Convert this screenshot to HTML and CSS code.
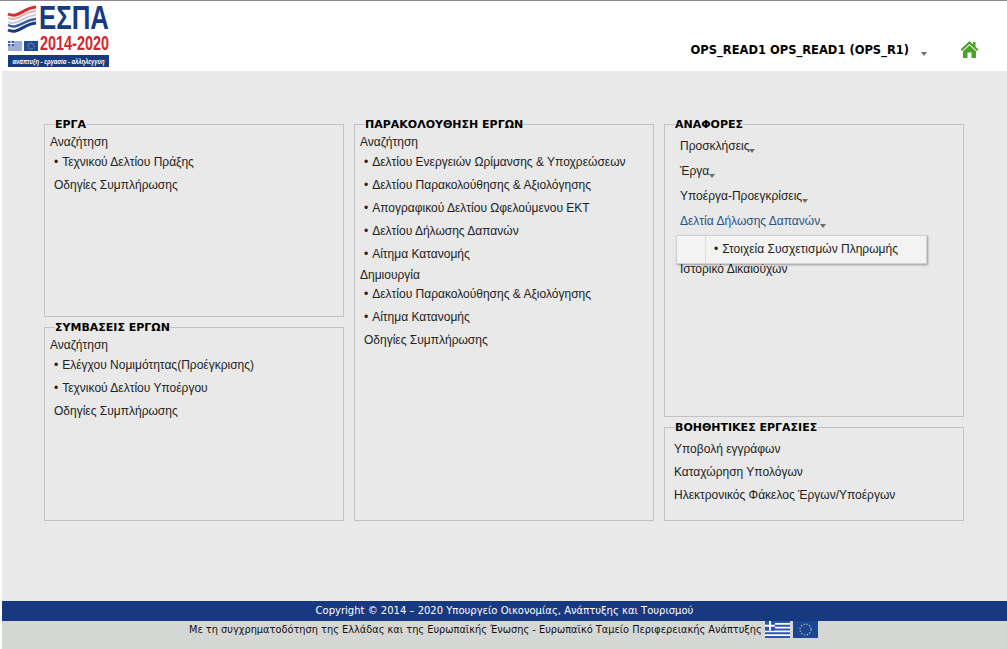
FILE: index.html
```
<!DOCTYPE html>
<html lang="el">
<head>
<meta charset="utf-8">
<title>ΕΣΠΑ 2014-2020</title>
<link rel="stylesheet" href="styles.css">
</head>
<body>
<div class="page">
  <header class="header">
    <svg class="logo" width="130" height="63" viewBox="0 0 130 63">
      <g fill="none">
        <path d="M0 9 C10 14 15 3 28 2" stroke="#d92b32" stroke-width="3"/>
        <path d="M0 13 C10 17 15 7 28 6" stroke="#eeb1b1" stroke-width="2"/>
        <path d="M0 17 C10 21 15 11 28 10" stroke="#c4cce0" stroke-width="2"/>
        <path d="M0 20 C10 25 15 15 28 14" stroke="#3a5aa0" stroke-width="2.500"/>
        <path d="M0 25 C10 30 15 19 28 18" stroke="#173a80" stroke-width="3"/>
      </g>
      <text x="31" y="24" class="logo-espa" textLength="70" lengthAdjust="spacingAndGlyphs">ΕΣΠΑ</text>
      <text x="32" y="45" class="logo-years" textLength="69" lengthAdjust="spacingAndGlyphs">2014-2020</text>
      <rect x="0" y="36" width="14" height="10" fill="#fff"/>
      <path d="M0 37h14M0 39h14M0 41h14M0 43h14M0 45h14" stroke="#3a5ea8" stroke-width="1"/>
      <rect x="0" y="36" width="6" height="5" fill="#3a5ea8"/>
      <path d="M3 36v5M0 38.500h6" stroke="#fff" stroke-width="1"/>
      <rect x="16" y="36" width="14" height="10" fill="#1f4a9c"/>
      <circle cx="23" cy="41" r="3" fill="none" stroke="#d8c94a" stroke-width="1" stroke-dasharray="1 1"/>
      <rect x="0" y="50" width="101" height="12" fill="#173a80"/>
      <text x="50.500" y="59" class="logo-tag" textLength="92" lengthAdjust="spacingAndGlyphs">ανάπτυξη - εργασία - αλληλεγγύη</text>
    </svg>
    <div class="user">
      <span class="user-name">OPS_READ1 OPS_READ1 (OPS_R1)</span>
      <span class="caret user-caret"></span>
      <svg class="home" width="19" height="19" viewBox="0 0 19 19">
        <path d="M9.500 1 L0.500 9.500 L2 11 L9.500 4 L17 11 L18.500 9.500 L15.500 6.700 V2 H13 V4.300Z" fill="#4ca329"/>
        <path d="M9.500 5.300 L3 11.300 V18 H7.500 V12.500 H11.500 V18 H16 V11.300Z" fill="#4ca329"/>
      </svg>
    </div>
  </header>

  <main class="main">
    <div class="column">
      <fieldset class="box box-top-left">
        <legend>ΕΡΓΑ</legend>
        <div class="heading">Αναζήτηση</div>
        <div class="item"><span class="bullet">•</span>Τεχνικού Δελτίου Πράξης</div>
        <div class="item">Οδηγίες Συμπλήρωσης</div>
      </fieldset>
      <fieldset class="box box-bottom-left">
        <legend>ΣΥΜΒΑΣΕΙΣ ΕΡΓΩΝ</legend>
        <div class="heading">Αναζήτηση</div>
        <div class="item"><span class="bullet">•</span>Ελέγχου Νομιμότητας(Προέγκρισης)</div>
        <div class="item"><span class="bullet">•</span>Τεχνικού Δελτίου Υποέργου</div>
        <div class="item">Οδηγίες Συμπλήρωσης</div>
      </fieldset>
    </div>
    <div class="column">
      <fieldset class="box box-full">
        <legend>ΠΑΡΑΚΟΛΟΥΘΗΣΗ ΕΡΓΩΝ</legend>
        <div class="heading">Αναζήτηση</div>
        <div class="item"><span class="bullet">•</span>Δελτίου Ενεργειών Ωρίμανσης &amp; Υποχρεώσεων</div>
        <div class="item"><span class="bullet">•</span>Δελτίου Παρακολούθησης &amp; Αξιολόγησης</div>
        <div class="item"><span class="bullet">•</span>Απογραφικού Δελτίου Ωφελούμενου ΕΚΤ</div>
        <div class="item"><span class="bullet">•</span>Δελτίου Δήλωσης Δαπανών</div>
        <div class="item"><span class="bullet">•</span>Αίτημα Κατανομής</div>
        <div class="heading heading-second">Δημιουργία</div>
        <div class="item"><span class="bullet">•</span>Δελτίου Παρακολούθησης &amp; Αξιολόγησης</div>
        <div class="item"><span class="bullet">•</span>Αίτημα Κατανομής</div>
        <div class="item">Οδηγίες Συμπλήρωσης</div>
      </fieldset>
    </div>
    <div class="column">
      <fieldset class="box box-reports">
        <legend>ΑΝΑΦΟΡΕΣ</legend>
        <div class="report">Προσκλήσεις<span class="caret"></span></div>
        <div class="report">Έργα<span class="caret"></span></div>
        <div class="report">Υποέργα-Προεγκρίσεις<span class="caret"></span></div>
        <div class="report report-active">Δελτία Δήλωσης Δαπανών<span class="caret"></span>
          <div class="popup">
            <div class="popup-gutter"></div>
            <div class="popup-item"><span class="bullet">•</span>Στοιχεία Συσχετισμών Πληρωμής</div>
          </div>
        </div>
        <div class="report report-last">Ιστορικό Δικαιούχων</div>
      </fieldset>
      <fieldset class="box box-help">
        <legend>ΒΟΗΘΗΤΙΚΕΣ ΕΡΓΑΣΙΕΣ</legend>
        <div class="help-item">Υποβολή εγγράφων</div>
        <div class="help-item">Καταχώρηση Υπολόγων</div>
        <div class="help-item">Ηλεκτρονικός Φάκελος Έργων/Υποέργων</div>
      </fieldset>
    </div>
  </main>

  <footer class="footer">
    <div class="copyright">Copyright © 2014 – 2020 Υπουργείο Οικονομίας, Ανάπτυξης και Τουρισμού</div>
    <div class="funding">
      <span class="funding-text">Με τη συγχρηματοδότηση της Ελλάδας και της Ευρωπαϊκής Ένωσης - Ευρωπαϊκό Ταμείο Περιφερειακής Ανάπτυξης</span>
      <svg class="flag" width="25" height="17" viewBox="0 0 25 17">
        <rect width="25" height="17" fill="#fff"/>
        <path d="M0 1h25M0 4.800h25M0 8.500h25M0 12.300h25M0 16h25" stroke="#2a55b0" stroke-width="1.900"/>
        <rect width="10" height="9.500" fill="#2a55b0"/>
        <path d="M5 0v9.500M0 4.800h10" stroke="#fff" stroke-width="2"/>
      </svg>
      <svg class="flag" width="25" height="17" viewBox="0 0 25 17">
        <rect width="25" height="17" fill="#1c4595"/>
        <circle cx="12.500" cy="8.500" r="5.500" fill="none" stroke="#c9c37a" stroke-width="1.200" stroke-dasharray="1.300 1.600"/>
      </svg>
    </div>
  </footer>
</div>
</body>
</html>
```

FILE: styles.css
```
* { box-sizing: border-box; }
html, body { margin: 0; padding: 0; }
body {
  width: 1007px;
  height: 649px;
  overflow: hidden;
  background: #fff;
  font-family: "Liberation Sans", Arial, sans-serif;
  font-size: 12px;
  color: #222;
}
.page {
  height: 649px;
  display: flex;
  flex-direction: column;
  border-top: 1px solid #8a8a8a;
  padding-left: 2px;
}
.header {
  height: 70px;
  display: flex;
  justify-content: space-between;
  background: #fff;
  padding-left: 6px;
  flex: none;
}
.logo { margin-top: 4px; overflow: visible; }
.logo-espa {
  font-family: "Liberation Sans", sans-serif;
  font-weight: 700;
  font-size: 33px;
  fill: #173a80;
}
.logo-years {
  font-family: "Liberation Sans", sans-serif;
  font-size: 20px;
  font-weight: 700;
  fill: #d7262d;
}
.logo-tag {
  font-family: "Liberation Sans", sans-serif;
  font-size: 7px;
  font-style: italic;
  font-weight: 700;
  fill: #fff;
  text-anchor: middle;
}
.user {
  display: flex;
  align-items: flex-start;
  padding: 39px 28px 0 0;
  color: #000;
}
.user-name {
  font-family: "DejaVu Sans", Verdana, sans-serif;
  font-weight: 700;
  font-size: 11.500px;
  line-height: 20px;
  margin-right: 12px;
}
.user-caret { margin: 12px 33px 0 0; }
.caret {
  display: inline-block;
  width: 0;
  height: 0;
  border-left: 3.500px solid transparent;
  border-right: 3.500px solid transparent;
  border-top: 4px solid #6e6e6e;
  vertical-align: -3px;
}
.main {
  flex: 1;
  display: flex;
  gap: 10px;
  background: #e9e9e9;
  padding: 47px 0 0 42px;
}
.column {
  width: 300px;
  height: 403px;
  display: flex;
  flex-direction: column;
  gap: 4px;
}
.box {
  margin: 0;
  border: 1px solid #c2c2c2;
  padding: 0 5px;
  min-width: 0;
}
.box legend {
  margin-left: 5px;
  padding: 0;
  font-family: "DejaVu Sans", Verdana, sans-serif;
  font-weight: 700;
  font-size: 11px;
  line-height: 13px;
  color: #000;
}
.box-top-left { height: 199px; flex: none; }
.box-bottom-left { flex: 1; }
.box-full { flex: 1; }
.box-reports { height: 299px; flex: none; }
.box-help { flex: 1; }
.heading { line-height: 14px; padding-top: 4px; height: 20px; }
.heading-second { height: 17px; padding-top: 1px; line-height: 16px; }
.item {
  height: 23px;
  line-height: 23px;
  padding-left: 4px;
  white-space: nowrap;
}
.bullet { margin-right: 4px; }
.report {
  height: 25px;
  line-height: 25px;
  margin-left: 10px;
  position: relative;
  white-space: nowrap;
}
.report:first-of-type { margin-top: 3px; }
.report-active { color: #28528a; }
.report-last { margin-top: 23px; }
.popup {
  position: absolute;
  left: -4px;
  top: 26px;
  width: 251px;
  height: 29px;
  display: flex;
  background: #f3f3f3;
  border: 1px solid #d2d2d2;
  box-shadow: 1px 1px 2px rgba(0, 0, 0, .35);
  color: #222;
  z-index: 2;
}
.popup-gutter { width: 29px; border-right: 1px solid #dcdcdc; }
.popup-item { padding-left: 8px; line-height: 26px; }
.help-item { height: 23px; line-height: 23px; margin-left: 4px; }
.help-item:first-of-type { margin-top: 4px; }
.footer { flex: none; }
.copyright {
  height: 20px;
  background: #17397f;
  color: #fff;
  text-align: center;
  font-family: "DejaVu Sans", Verdana, sans-serif;
  font-size: 10px;
  font-weight: 400;
  line-height: 20px;
  white-space: nowrap;
}
.funding {
  height: 28px;
  background: #d5d7d5;
  display: flex;
  align-items: flex-start;
  padding-left: 187px;
}
.funding-text {
  font-family: "DejaVu Sans", Verdana, sans-serif;
  font-size: 9.800px;
  line-height: 17px;
  color: #111;
  white-space: nowrap;
}
.flag { flex: none; margin-left: 3px; }
```
